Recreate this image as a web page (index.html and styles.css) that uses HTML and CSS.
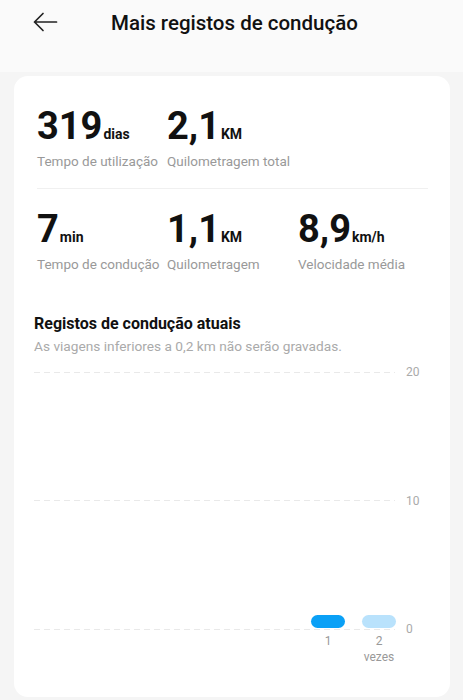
FILE: index.html
```html
<!DOCTYPE html>
<html lang="pt">
<head>
    <meta charset="UTF-8">
    <meta name="viewport" content="width=device-width, initial-scale=1.0">
    <title>Mais registos de condução</title>
    <link rel="stylesheet" href="styles.css">
</head>
<body>
    <header class="topbar">
        <svg class="back" width="26" height="22" viewBox="0 0 26 22">
            <path d="M24.5 11H2.5M11 2.5L2.5 11L11 19.5" fill="none" stroke="#222" stroke-width="1.7" stroke-linecap="round" stroke-linejoin="round"/>
        </svg>
        <h1 class="title">Mais registos de condução</h1>
    </header>

    <main class="card">
        <section class="stats">
            <div class="stat">
                <div class="value">319<span class="unit">dias</span></div>
                <div class="label">Tempo de utilização</div>
            </div>
            <div class="stat">
                <div class="value">2,1<span class="unit">KM</span></div>
                <div class="label">Quilometragem total</div>
            </div>
        </section>

        <hr class="divider">

        <section class="stats">
            <div class="stat">
                <div class="value">7<span class="unit">min</span></div>
                <div class="label">Tempo de condução</div>
            </div>
            <div class="stat">
                <div class="value">1,1<span class="unit">KM</span></div>
                <div class="label">Quilometragem</div>
            </div>
            <div class="stat">
                <div class="value">8,9<span class="unit">km/h</span></div>
                <div class="label">Velocidade média</div>
            </div>
        </section>

        <h2 class="section-title">Registos de condução atuais</h2>
        <p class="section-note">As viagens inferiores a 0,2 km não serão gravadas.</p>

        <div class="chart">
            <div class="grid-row"><span class="grid-line"></span><span class="axis">20</span></div>
            <div class="grid-row"><span class="grid-line"></span><span class="axis">10</span></div>
            <div class="grid-row"><span class="grid-line"></span><span class="axis">0</span></div>

            <!-- one pill per trip -->
            <div class="bars">
                <div class="bar-col">
                    <span class="pill active"></span>
                    <span class="bar-label">1</span>
                </div>
                <div class="bar-col">
                    <span class="pill"></span>
                    <span class="bar-label">2</span>
                    <span class="bar-label">vezes</span>
                </div>
            </div>
        </div>
    </main>
</body>
</html>
```

FILE: styles.css
```css
/* General Styles */
body {
    font-family: 'Roboto', 'Noto Sans', sans-serif;
    margin: 0;
    padding: 0;
    background-color: #f5f5f5;
    color: #111;
}

.topbar {
    height: 72px;
    background-color: #fafafa;
    display: flex;
    align-items: flex-start;
    padding: 11px 0 0 32px;
    box-sizing: border-box;
}

.back {
    display: block;
}

.title {
    margin: -2px 0 0 53px;
    font-size: 20.5px;
    font-weight: 500;
    line-height: 28px;
    color: #111;
}

.card {
    margin: 4px 13px 0 14px;
    height: 621px;
    padding: 31px 20px 0;
    box-sizing: border-box;
    background-color: #fff;
    border-radius: 14px;
}

.stats {
    display: grid;
    grid-template-columns: 130px 131px 130px;
    margin-left: 3px;
}

.value {
    font-size: 38px;
    font-weight: 700;
    line-height: 38px;
}

.unit {
    font-size: 14px;
    margin-left: 1px;
}

.label {
    margin-top: -2px;
    font-size: 13.5px;
    line-height: 20px;
    color: #999;
    white-space: nowrap;
}

.divider {
    border: none;
    border-top: 1px solid #f0f0f0;
    margin: 17px 2px 21px 3px;
}

.section-title {
    margin: 40px 0 0;
    font-size: 16px;
    font-weight: 700;
    line-height: 20px;
}

.section-note {
    margin: 3px 0 0;
    font-size: 13.7px;
    line-height: 18px;
    color: #aaa;
}

.chart {
    position: relative;
    height: 275px;
    margin-top: 8px;
    display: flex;
    flex-direction: column;
    justify-content: space-between;
}

.grid-row {
    display: flex;
    align-items: center;
    height: 18px;
}

.grid-line {
    width: 361px;
    height: 1px;
    background: repeating-linear-gradient(to right, #e9e9e9 0 6px, transparent 6px 10px);
}

.axis {
    margin-left: 11px;
    font-size: 12px;
    color: #aaa;
}

.bars {
    position: absolute;
    left: 277px;
    top: 252px;
    display: flex;
    gap: 17px;
}

.bar-col {
    width: 34px;
    display: flex;
    flex-direction: column;
    align-items: center;
}

.pill {
    width: 34px;
    height: 13px;
    border-radius: 7px;
    background-color: #b9e2fc;
}

.pill.active {
    background-color: #0aa0f6;
}

.bar-label {
    font-size: 12px;
    line-height: 16px;
    color: #999;
}

.pill + .bar-label {
    margin-top: 5px;
}
```
